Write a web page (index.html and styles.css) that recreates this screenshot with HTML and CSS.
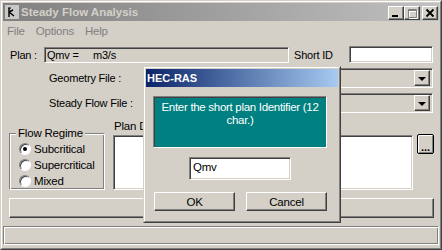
FILE: index.html
```html
<!DOCTYPE html>
<html lang="en">
<head>
    <meta charset="UTF-8">
    <title>Steady Flow Analysis</title>
    <link rel="stylesheet" href="styles.css">
</head>
<body>
    <div class="window">
        <div class="window-inner">
            <div class="titlebar">
                <svg class="app-icon" width="16" height="16" viewBox="0 0 16 16">
                    <rect x="1" y="1" width="14" height="14" fill="#c8c8c8"/>
                    <path d="M5 4 L5 13 M5 8 L9 6 M5 8 L10 12" stroke="#000" stroke-width="1.4" fill="none"/>
                    <path d="M4 4 L7 4" stroke="#000" stroke-width="1"/>
                </svg>
                <span class="title">Steady Flow Analysis</span>
                <div class="caption-buttons">
                    <span class="cap-btn">
                        <svg width="14" height="12" viewBox="0 0 14 12"><rect x="3" y="8" width="6" height="2" fill="#000"/></svg>
                    </span>
                    <span class="cap-btn">
                        <svg width="14" height="12" viewBox="0 0 14 12">
                            <path d="M3.5 2.5 H11.5 V10.5 H3.5 Z M3.5 3.5 H11.5" stroke="#fff" fill="none" transform="translate(1 1)"/>
                            <path d="M3.5 2.5 H11.5 V10.5 H3.5 Z M3.5 3.5 H11.5" stroke="#808080" fill="none"/>
                        </svg>
                    </span>
                    <span class="cap-btn close">
                        <svg width="14" height="12" viewBox="0 0 14 12"><path d="M3.5 2.5 L10.5 9.5 M10.5 2.5 L3.5 9.5" stroke="#000" stroke-width="1.8"/></svg>
                    </span>
                </div>
            </div>

            <div class="menubar">
                <span>File</span>
                <span>Options</span>
                <span>Help</span>
            </div>

            <div class="row plan-row">
                <span class="plan-label">Plan :</span>
                <div class="plan-box">Qmv =     m3/s</div>
                <span class="short-label">Short ID</span>
                <div class="short-input"></div>
            </div>

            <div class="row file-row geom">
                <span class="file-label">Geometry File :</span>
                <div class="combo"><span class="combo-arrow"></span></div>
            </div>

            <div class="row file-row flow">
                <span class="file-label">Steady Flow File :</span>
                <div class="combo"><span class="combo-arrow"></span></div>
            </div>

            <div class="mid">
                <fieldset class="regime">
                    <legend>Flow Regime</legend>
                    <div class="radio-row"><span class="radio checked"></span>Subcritical</div>
                    <div class="radio-row"><span class="radio"></span>Supercritical</div>
                    <div class="radio-row"><span class="radio"></span>Mixed</div>
                </fieldset>
                <div class="desc">
                    <div class="desc-label">Plan Description :</div>
                    <div class="desc-box"></div>
                </div>
                <div class="dots-btn">...</div>
            </div>

            <div class="wide-btn"></div>

            <div class="statusbar"></div>
        </div>

        <div class="dialog">
            <div class="dialog-inner">
                <div class="dialog-title">HEC-RAS</div>
                <div class="prompt">Enter the short plan Identifier (12 char.)</div>
                <div class="dialog-input">Qmv</div>
                <div class="dialog-buttons">
                    <span class="btn">OK</span>
                    <span class="btn">Cancel</span>
                </div>
            </div>
        </div>
    </div>
</body>
</html>
```

FILE: styles.css
```css
* {
    box-sizing: border-box;
}
body {
    margin: 0;
    background-color: #d4d0c8;
    font-family: "Liberation Sans", Arial, sans-serif;
    font-size: 11px;
    letter-spacing: -0.2px;
    color: #000;
}
.window {
    position: relative;
    width: 442px;
    height: 250px;
    border: 1px solid;
    border-color: #d4d0c8 #404040 #404040 #d4d0c8;
}
.window-inner {
    height: 100%;
    border: 1px solid;
    border-color: #fff #808080 #808080 #fff;
    padding: 1px;
    display: flex;
    flex-direction: column;
}

/* title bar */
.titlebar {
    height: 18px;
    flex: none;
    display: flex;
    align-items: center;
    padding: 0 1px 0 1px;
    background: linear-gradient(90deg, #808080, #c0c0c0);
}
.app-icon {
    flex: none;
}
.title {
    margin-left: 1px;
    font-weight: bold;
    font-size: 11.5px;
    letter-spacing: 0;
    color: #d4d0c8;
}
.caption-buttons {
    margin-left: auto;
    display: flex;
    margin-top: 2px;
}
.cap-btn {
    width: 16px;
    height: 14px;
    display: flex;
    align-items: center;
    justify-content: center;
    background-color: #d4d0c8;
    border: 1px solid;
    border-color: #fff #404040 #404040 #fff;
    box-shadow: inset -1px -1px 0 #808080;
}
.cap-btn.close {
    margin-left: 2px;
}

/* menu */
.menubar {
    height: 20px;
    flex: none;
    display: flex;
    align-items: center;
    padding-left: 4px;
    gap: 11px;
    color: #808080;
    font-size: 11.5px;
}

/* form rows */
.row {
    display: flex;
    align-items: center;
    flex: none;
}
.plan-row {
    margin-top: 5px;
    height: 17px;
    padding-left: 7px;
}
.plan-label {
    width: 34px;
}
.plan-box {
    width: 245px;
    height: 16px;
    padding: 1px 0 0 2px;
    white-space: pre;
    border: 1px solid;
    border-color: #808080 #fff #fff #808080;
    box-shadow: inset 1px 1px 0 #404040;
}
.short-label {
    margin-left: 5px;
    width: 55px;
}
.short-input {
    width: 84px;
    height: 17px;
    background-color: #fff;
    border: 1px solid;
    border-color: #808080 #fff #fff #808080;
    box-shadow: inset 1px 1px 0 #404040, inset -1px -1px 0 #d4d0c8;
}
.file-row {
    padding-left: 46px;
    padding-right: 6px;
}
.geom {
    margin-top: 5px;
    height: 20px;
}
.flow {
    margin-top: 5px;
    height: 20px;
}
.file-label {
    width: 100px;
    flex: none;
}
.combo {
    flex: 1;
    height: 20px;
    display: flex;
    justify-content: flex-end;
    align-items: center;
    padding-right: 2px;
    border: 1px solid;
    border-color: #808080 #fff #fff #808080;
    box-shadow: inset 1px 1px 0 #404040, inset -1px -1px 0 #d4d0c8;
}
.combo-arrow {
    width: 16px;
    height: 16px;
    display: flex;
    align-items: center;
    justify-content: center;
    border: 1px solid;
    border-color: #fff #404040 #404040 #fff;
    box-shadow: inset -1px -1px 0 #808080;
}
.combo-arrow::after {
    content: "";
    border-left: 4px solid transparent;
    border-right: 4px solid transparent;
    border-top: 4px solid #000;
    margin-top: 1px;
}

/* flow regime + description */
.mid {
    display: flex;
    align-items: flex-start;
    margin-top: 6px;
    flex: none;
}
.regime {
    margin: 9px 0 0 6px;
    width: 96px;
    padding: 2px 0 0 9px;
    border: 1px solid;
    border-color: #808080 #fff #fff #808080;
    box-shadow: inset 1px 1px 0 #fff, inset -1px -1px 0 #808080;
}
.regime legend {
    padding: 0 2px;
    margin-left: -3px;
    line-height: 11px;
    font-size: 11.5px;
    background-color: #d4d0c8;
}
.radio-row {
    display: flex;
    align-items: center;
    height: 16px;
    font-size: 11.5px;
}
.radio {
    position: relative;
    width: 12px;
    height: 12px;
    margin-right: 3px;
    border-radius: 50%;
    background-color: #fff;
    border: 1px solid;
    border-color: #808080 #fff #fff #808080;
    box-shadow: inset 1px 1px 0 #404040;
}
.radio.checked::after {
    content: "";
    position: absolute;
    left: 3px;
    top: 3px;
    width: 4px;
    height: 4px;
    border-radius: 50%;
    background-color: #000;
}
.desc {
    margin-left: 8px;
    width: 300px;
}
.desc-label {
    height: 14px;
    line-height: 14px;
    padding-left: 1px;
    font-size: 11.5px;
    white-space: nowrap;
}
.desc-box {
    margin-top: 2px;
    height: 55px;
    background-color: #fff;
    border: 1px solid;
    border-color: #808080 #fff #fff #808080;
    box-shadow: inset 1px 1px 0 #404040, inset -1px -1px 0 #d4d0c8;
}
.dots-btn {
    margin: 15px 0 0 4px;
    width: 17px;
    height: 20px;
    display: flex;
    align-items: flex-end;
    justify-content: center;
    font-weight: bold;
    line-height: 12px;
    letter-spacing: 0;
    border: 1px solid #000;
    border-radius: 2px;
    box-shadow: inset 1px 1px 0 #fff, inset -1px -1px 0 #808080;
}

.wide-btn {
    flex: none;
    margin: 8px 0 0 6px;
    width: 425px;
    height: 20px;
    border: 1px solid;
    border-color: #fff #404040 #404040 #fff;
    box-shadow: inset -1px -1px 0 #808080;
}

.statusbar {
    flex: none;
    margin-top: auto;
    margin-bottom: 2px;
    height: 19px;
    border: 1px solid;
    border-color: #808080 #fff #fff #808080;
    box-shadow: inset 1px 1px 0 #fff, inset -1px -1px 0 #808080;
}

/* modal dialog */
.dialog {
    position: absolute;
    left: 142px;
    top: 65px;
    width: 198px;
    height: 157px;
    background-color: #d4d0c8;
    border: 1px solid;
    border-color: #d4d0c8 #404040 #404040 #d4d0c8;
}
.dialog-inner {
    height: 100%;
    border: 1px solid;
    border-color: #fff #808080 #808080 #fff;
    padding: 1px;
}
.dialog-title {
    height: 18px;
    line-height: 18px;
    padding-left: 1px;
    color: #fff;
    font-weight: bold;
    letter-spacing: 0;
    background: linear-gradient(90deg, #0a246a, #a6caf0);
}
.prompt {
    margin: 9px 0 0 7px;
    width: 174px;
    height: 52px;
    padding: 4px 1px 0;
    line-height: 13px;
    text-align: center;
    font-size: 11.5px;
    letter-spacing: -0.3px;
    color: #fff;
    background-color: #008080;
    border: 1px solid;
    border-color: #808080 #fff #fff #808080;
    box-shadow: inset 1px 1px 0 #404040;
}
.dialog-input {
    margin: 9px 0 0 43px;
    width: 102px;
    height: 23px;
    padding: 3px 0 0 3px;
    font-size: 11.5px;
    background-color: #fff;
    border: 1px solid;
    border-color: #808080 #fff #fff #808080;
    box-shadow: inset 1px 1px 0 #404040, inset -1px -1px 0 #d4d0c8;
}
.dialog-buttons {
    display: flex;
    gap: 11px;
    margin: 12px 0 0 8px;
}
.btn {
    width: 81px;
    height: 19px;
    display: flex;
    align-items: center;
    justify-content: center;
    font-size: 11.5px;
    border: 1px solid;
    border-color: #fff #404040 #404040 #fff;
    box-shadow: inset -1px -1px 0 #808080;
}
```
